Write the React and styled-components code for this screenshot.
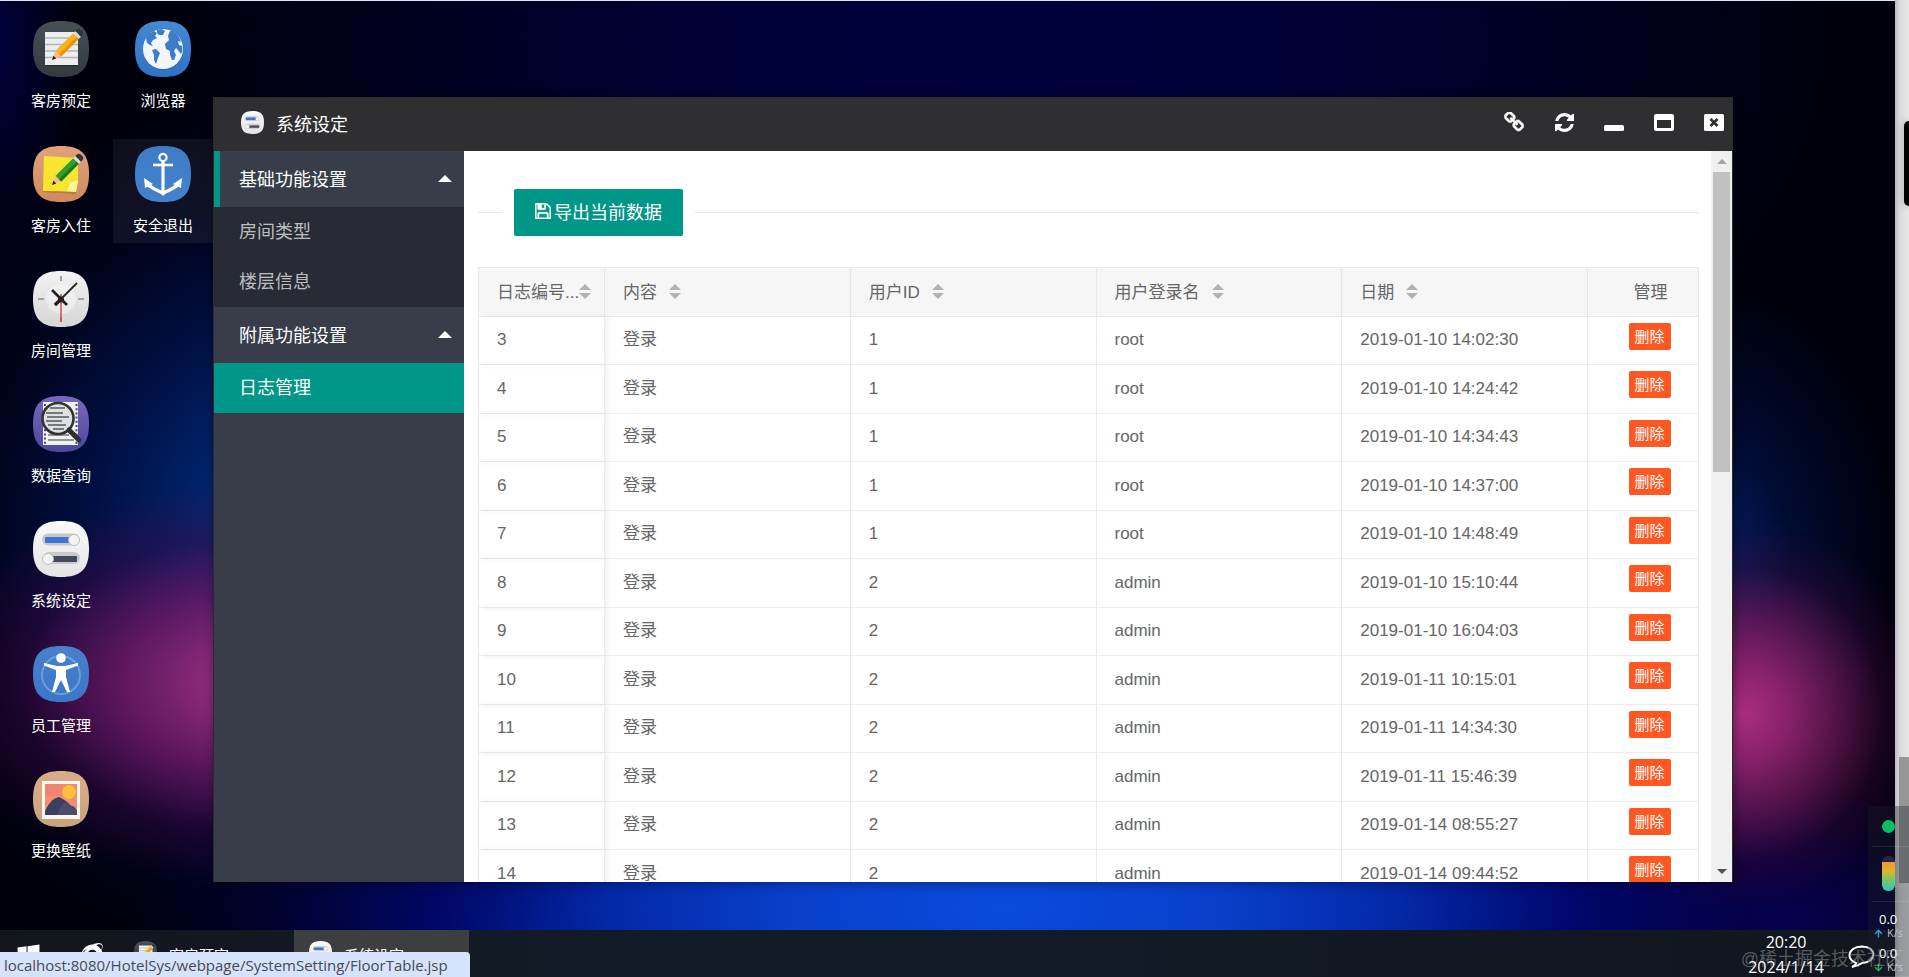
import React from 'react';
import styled, { createGlobalStyle, css } from 'styled-components';
import { FaWindows, FaInternetExplorer, FaArrowUp, FaArrowDown } from 'react-icons/fa';

const GlobalStyle = createGlobalStyle`
  * {
    box-sizing: border-box;
  }

  body {
    margin: 0;
    overflow: hidden;
    font-family: 'Liberation Sans', 'Noto Sans CJK SC', sans-serif;
    color: #666;
  }

  button {
    border: none;
    background: none;
    padding: 0;
    margin: 0;
    font: inherit;
    color: inherit;
    cursor: pointer;
  }

  a {
    color: inherit;
    text-decoration: none;
  }
`;

// Page shell
const Screen = styled.div`
  position: relative;
  display: flex;
  height: 100vh;
  overflow: hidden;
`;

const Desktop = styled.main`
  flex: 1;
  min-width: 0;
  display: flex;
  flex-direction: column;
  border-top: 1px solid #dde6fa;
  background:
    radial-gradient(ellipse 18% 21% at 14% 70%, #9a3886 0%, rgba(144, 40, 122, 0.9) 22%, rgba(118, 24, 102, 0.75) 45%, rgba(70, 8, 76, 0.4) 72%, rgba(40, 0, 60, 0) 100%),
    radial-gradient(ellipse 10% 20% at 92% 73%, #aa2e7e 0%, rgba(152, 36, 114, 0.88) 25%, rgba(118, 26, 94, 0.68) 50%, rgba(70, 10, 66, 0.32) 75%, rgba(40, 0, 50, 0) 100%),
    radial-gradient(ellipse 24% 46% at 17% 54%, #00469c 0%, rgba(0, 44, 128, 0.85) 25%, rgba(0, 24, 96, 0.65) 50%, rgba(0, 10, 60, 0.3) 75%, rgba(0, 4, 30, 0) 100%),
    radial-gradient(ellipse 10% 28% at 90% 57%, #04206c 0%, rgba(0, 16, 66, 0.7) 45%, rgba(0, 8, 40, 0) 100%),
    radial-gradient(ellipse 46% 36% at 53% 93%, #0a4bdc 0%, #083fca 25%, rgba(4, 42, 174, 0.96) 45%, rgba(0, 8, 124, 0.86) 65%, rgba(0, 0, 80, 0.4) 85%, rgba(0, 0, 40, 0) 100%),
    radial-gradient(ellipse 14% 14% at 94% 94%, rgba(10, 0, 84, 0.9), rgba(6, 0, 50, 0)),
    radial-gradient(ellipse 44% 50% at 53% 4%, #00003e 0%, #000034 40%, rgba(0, 0, 16, 0) 100%),
    radial-gradient(ellipse 4% 24% at 0% 4%, #00003a, rgba(0, 0, 16, 0)),
    #00000c;
`;

const Workspace = styled.div`
  position: relative;
  flex: 1;
  min-height: 0;
  display: flex;
  gap: 2px;
  padding: 13px 11px 0;
`;

const IconColumn = styled.div`
  display: flex;
  flex-direction: column;
  gap: 21px;
`;

const Shortcut = styled.button`
  width: 100px;
  height: 104px;
  padding-top: 7px;
  display: flex;
  flex-direction: column;
  align-items: center;
  gap: 14px;
  font-size: 15px;
  line-height: 20px;
  color: #fff;
  background: ${({ $active }) => ($active ? 'rgba(255, 255, 255, 0.06)' : 'transparent')};

  svg {
    flex: none;
  }
`;

// Application window
const AppWindow = styled.section`
  position: absolute;
  top: 96px;
  right: 162px;
  bottom: 48px;
  left: 213px;
  display: flex;
  flex-direction: column;
  border: 1px solid #2b2b2d;
  border-bottom: none;
  box-shadow: 1px 1px 10px rgba(0, 0, 0, 0.4);
`;

const TitleBar = styled.header`
  height: 53px;
  flex: none;
  display: flex;
  align-items: center;
  gap: 12px;
  padding: 0 8px 5px 27px;
  background: #2f2f31;
  color: #fff;
`;

const WindowTitle = styled.h1`
  flex: 1;
  margin: 0;
  padding-top: 5px;
  font-size: 18px;
  line-height: 24px;
  font-weight: 400;
`;

const TitleActions = styled.div`
  display: flex;
  gap: 30px;
`;

const TitleButton = styled.button`
  width: 20px;
  height: 20px;
  display: flex;
  align-items: center;
  justify-content: center;
`;

const WindowBody = styled.div`
  flex: 1;
  min-height: 0;
  display: flex;
`;

const SideNav = styled.nav`
  width: 250px;
  flex: none;
  background: #393d49;
  color: #fff;
  font-size: 18px;
`;

const NavHeading = styled.button`
  width: 100%;
  height: 56px;
  display: flex;
  align-items: center;
  justify-content: space-between;
  padding: 0 12px 2px ${({ $current }) => ($current ? '19px' : '25px')};
  border-left: ${({ $current }) => ($current ? '6px solid #009688' : 'none')};
`;

const NavCaret = styled.span`
  border: 7px solid transparent;
  border-top-width: 0;
  border-bottom-color: #fff;
`;

const NavGroup = styled.div`
  background: #282b33;
`;

const NavLink = styled.a`
  display: block;
  padding-left: 25px;
  line-height: 50px;
  color: rgba(255, 255, 255, 0.7);

  ${({ $active }) => $active && css`
    background: #009688;
    color: #fff;
  `}
`;

const Content = styled.div`
  flex: 1;
  min-width: 0;
  overflow: hidden;
  padding: 38px 12px 0 14px;
  background: #fff;
`;

const Toolbar = styled.div`
  display: flex;
  align-items: center;
  gap: 12px;
  margin-bottom: 31px;

  &::before,
  &::after {
    content: '';
    height: 1px;
    background: #e6e6e6;
  }

  &::before {
    width: 24px;
  }

  &::after {
    flex: 1;
  }
`;

const ExportButton = styled.button`
  height: 47px;
  display: flex;
  align-items: center;
  gap: 3px;
  padding: 0 21px 3px;
  border-radius: 2px;
  background: #009688;
  color: #fff;
  font-size: 18px;
`;

const LogTable = styled.table`
  width: 100%;
  table-layout: fixed;
  border-collapse: separate;
  border-spacing: 0;
  border: 1px solid #e8e8e8;
  border-width: 1px 0 0 1px;
  font-size: 17px;
`;

const HeadCell = styled.th`
  width: ${({ $width }) => $width || 'auto'};
  height: 49px;
  padding: ${({ $center }) => ($center ? '0 0 4px 15px' : '0 0 4px 18px')};
  background: #f6f6f6;
  border: 1px solid #e8e8e8;
  border-width: 0 1px 1px 0;
  font-weight: 400;
  text-align: ${({ $center }) => ($center ? 'center' : 'left')};
  white-space: nowrap;
`;

const SortButton = styled.button`
  display: inline-flex;
  align-items: center;
  gap: ${({ $tight }) => ($tight ? '0' : '12px')};
`;

const SortArrows = styled.span`
  display: flex;
  flex-direction: column;
  gap: 3px;
  padding-top: 3px;

  &::before,
  &::after {
    content: '';
    border: 6px solid transparent;
  }

  &::before {
    border-top-width: 0;
    border-bottom-color: #b2b2b2;
  }

  &::after {
    border-bottom-width: 0;
    border-top-color: #b2b2b2;
  }
`;

const Row = styled.tr`
  height: 48px;

  &:nth-child(even) {
    height: 49px;
  }
`;

const Cell = styled.td`
  padding: 0 0 1px 18px;
  border: 1px solid #ececec;
  border-width: 0 1px 1px 0;
  line-height: 24px;

  &:first-child {
    box-shadow: 3px 0 6px rgba(0, 0, 0, 0.06);
  }
`;

const ActionCell = styled(Cell)`
  padding: 6px 0 0 13px;
  vertical-align: top;
`;

const DeleteButton = styled.button`
  display: block;
  width: 42px;
  height: 27px;
  margin: 0 auto;
  border-radius: 2px;
  background: #ff5722;
  color: #fff;
  font-size: 15px;
  line-height: 27px;
`;

const ScrollTrack = styled.div`
  width: 21px;
  flex: none;
  display: flex;
  flex-direction: column;
  align-items: center;
  padding: 8px 0;
  background: #f0f0f0;
`;

const ScrollThumb = styled.div`
  width: 17px;
  height: 42%;
  margin: 8px 0 auto;
  background: #c1c1c1;
`;

const ScrollArrow = styled.span`
  border: 5px solid transparent;
  ${({ $down }) => ($down
    ? css`border-bottom-width: 0; border-top-color: #505050;`
    : css`border-top-width: 0; border-bottom-color: #a3a3a3;`)}
`;

// Taskbar
const Taskbar = styled.footer`
  height: 47px;
  flex: none;
  display: flex;
  align-items: flex-start;
  overflow: hidden;
  background: linear-gradient(90deg, #12161c, #111b28 35%, #111a26 60%, #12151d);
  color: #fff;
`;

const TaskShortcuts = styled.div`
  width: 119px;
  display: flex;
  gap: 38px;
  padding: 13px 0 0 16px;
`;

const TaskButton = styled.button`
  width: 175px;
  height: 50px;
  display: flex;
  align-items: flex-start;
  gap: 12px;
  padding: 11px 0 0 15px;
  background: ${({ $active }) => ($active ? '#3c3e3f' : 'transparent')};
  font-size: 15px;
  line-height: 30px;
`;

const Tray = styled.div`
  flex: 1;
  display: flex;
  align-items: flex-start;
  justify-content: flex-end;
  gap: 24px;
  padding-right: 20px;
`;

const Clock = styled.time`
  text-align: center;
  font-family: 'Open Sans', sans-serif;
  font-size: 16px;
  line-height: 25px;
`;

const ChatButton = styled.button`
  padding-top: 15px;
`;

const StatusUrl = styled.div`
  position: absolute;
  left: 0;
  bottom: 0;
  min-width: 470px;
  height: 25px;
  padding: 0 9px 0 4px;
  border-top-right-radius: 4px;
  background: #d6e3fc;
  color: #474a52;
  font-family: 'Open Sans', sans-serif;
  font-size: 15px;
  line-height: 27px;
`;

// Strip of the page behind the desktop, with its own scrollbar
const EdgeStrip = styled.aside`
  width: 14px;
  flex: none;
  display: flex;
  flex-direction: column;
  align-items: flex-end;
  padding-top: 121px;
  background: linear-gradient(90deg, #bdbdbf, #dcdcdc 35%, #e6e6e6);
`;

const EdgeHandle = styled.div`
  width: 5px;
  height: 85px;
  border-radius: 5px 0 0 5px;
  background: #000;
  box-shadow: 0 0 8px rgba(0, 0, 0, 0.3);
`;

const EdgeThumb = styled.div`
  width: 10px;
  height: 126px;
  margin: auto 0 94px;
  background: #969696;
`;

const Monitor = styled.div`
  position: absolute;
  right: 0;
  bottom: 0;
  width: 41px;
  height: 171px;
  padding-left: 4px;
  border-radius: 4px 0 0 4px;
  background: rgba(28, 30, 42, 0.36);
  font-family: 'Open Sans', sans-serif;
`;

const MonitorSection = styled.div`
  height: ${({ $height }) => $height};
  padding: ${({ $pad }) => $pad};
  border-bottom: 1px solid rgba(255, 255, 255, 0.1);
`;

const StatusDot = styled.div`
  width: 13px;
  height: 13px;
  border-radius: 50%;
  background: #07c160;
`;

const Gauge = styled.div`
  width: 13px;
  height: 35px;
  border-radius: 6px;
  background: linear-gradient(#2d2340 6px, #ee9a3a 6px, #d9b62c 16px, #6fc96a 24px, #35c3bd);
`;

const Speed = styled.div`
  padding-left: 2px;
  color: #fff;
  font-size: 13px;
  line-height: 16px;

  strong {
    display: block;
    padding-left: 5px;
    font-weight: 400;
  }
`;

const SpeedUnit = styled.span`
  display: flex;
  align-items: center;
  gap: 4px;
  margin-bottom: 6px;
  font-size: 11px;
  line-height: 12px;
  color: #bfc0c8;
`;

const Watermark = styled.div`
  position: absolute;
  right: 6px;
  bottom: 6px;
  font-size: 18px;
  line-height: 24px;
  color: rgba(205, 205, 205, 0.38);
  pointer-events: none;
`;

// Icons
const TILE = 'M28 0C48 0 56 8 56 28S48 56 28 56 0 48 0 28 8 0 28 0Z';

const Tile = ({ id, from, to, size = 56, children }) => (
  <svg width={size} height={size} viewBox="0 0 56 56" aria-hidden="true">
    <defs>
      <linearGradient id={id} x1="0" y1="0" x2="0" y2="1">
        <stop offset="0" stopColor={from} />
        <stop offset="1" stopColor={to} />
      </linearGradient>
    </defs>
    <path d={TILE} fill={`url(#${id})`} />
    {children}
  </svg>
);

const Pencil = ({ body, shade }) => (
  <g transform="translate(19 39) rotate(-45)">
    <path d="M0 0L9 -4V4Z" fill="#f3bd8c" />
    <path d="M0 0L4 -2V2Z" fill="#222" />
    <rect x="9" y="-4" width="25" height="8" fill={body} />
    <rect x="9" y="1" width="25" height="3" fill={shade} />
    <rect x="34" y="-4" width="3" height="8" fill="#d9dcdc" />
    <path d="M37 -4h2q3 0 3 4t-3 4h-2Z" fill="#303437" />
  </g>
);

const BookingIcon = ({ size }) => (
  <Tile id="tile-booking" from="#465057" to="#343a40" size={size}>
    <path d="M12 11H45V44H12Z" fill="#eceded" />
    <path d="M12 17H45M12 23.500H45M12 30H45M12 36.500H45" stroke="#b3b6b8" strokeWidth="1.400" />
    <path d="M12 44.500H45" stroke="#22272a" strokeWidth="1" />
    <Pencil body="#fbb21c" shade="#e8920e" />
  </Tile>
);

const CheckInIcon = () => (
  <Tile id="tile-checkin" from="#e0a27c" to="#cf8a5f">
    <path d="M11 10L45 12V36L43 46L10 45Z" fill="#f7e52f" />
    <path d="M10 45L43 46V48L10 46Z" fill="#b77b3a" />
    <path d="M34 45L37 37L45 34L43 46Z" fill="#fdf3a0" />
    <Pencil body="#2ea12c" shade="#157a1b" />
  </Tile>
);

const RoomIcon = () => (
  <Tile id="tile-room" from="#f3f3f3" to="#d5d5d5">
    <circle cx="28" cy="28" r="15" fill="#fff" opacity="0.35" />
    <path d="M28 5V10M28 46V51M5 28H11M45 28H51" stroke="#8d8d8d" strokeWidth="1.600" />
    <path d="M28 23V51" stroke="#d8433b" strokeWidth="1.400" />
    <path d="M22 34L44 12" stroke="#222" strokeWidth="1.800" />
    <path d="M19 19L34 34" stroke="#222" strokeWidth="2.600" />
    <path d="M22 34L28 28" stroke="#222" strokeWidth="3.400" />
    <circle cx="28" cy="28.500" r="3" fill="#222" />
  </Tile>
);

const QueryIcon = () => (
  <Tile id="tile-query" from="#7867bd" to="#4c489d">
    <path d="M10 6H45V49H10Z" fill="#f1f1f4" />
    <path d="M12 8V48M43.500 8V48" stroke="#4d4680" strokeWidth="2" strokeDasharray="2 2.200" />
    <path d="M15 44H41M15 39H36" stroke="#777" strokeWidth="1.500" />
    <circle cx="25" cy="22.500" r="15.500" fill="#dfe0e2" stroke="#333" strokeWidth="2.600" />
    <path d="M17 12H32M13 17H30M14 21H36M13 25H29M15 29H33M20 33H31" stroke="#55585c" strokeWidth="1.500" />
    <path d="M36 34L46 44" stroke="#2e2e30" strokeWidth="5" strokeLinecap="round" />
  </Tile>
);

const SettingsIcon = ({ size }) => (
  <Tile id="tile-settings" from="#fafafa" to="#e4e4e6" size={size}>
    <rect x="9" y="12.500" width="37" height="12" rx="6" fill="#c9c9cb" />
    <rect x="12" y="16" width="26" height="6" rx="1" fill="#3b76d6" />
    <circle cx="41" cy="19" r="5.500" fill="#f4f4f4" stroke="#bdbdbd" />
    <rect x="10" y="31" width="37" height="12" rx="6" fill="#c9c9cb" />
    <rect x="18" y="35" width="26" height="6" rx="1" fill="#434a5c" />
    <circle cx="15" cy="38" r="5.500" fill="#f4f4f4" stroke="#bdbdbd" />
  </Tile>
);

const StaffIcon = () => (
  <Tile id="tile-staff" from="#4a80ca" to="#3b76c8">
    <circle cx="28" cy="29" r="19" fill="none" stroke="#7fb0e8" strokeWidth="1.800" opacity="0.7" />
    <circle cx="28" cy="12" r="4.800" fill="#fff" />
    <path d="M11 17L24 20H32L45 17V19.500L33 24V31L37 46H34L28 34L22 46H19L23 31V24L11 19.500Z" fill="#fff" />
  </Tile>
);

const WallpaperIcon = () => (
  <Tile id="tile-wallpaper" from="#d8ae88" to="#c9a27d">
    <path d="M9 10H47V48H9Z" fill="#fbf6f2" />
    <path d="M12 13H44V44H12Z" fill="#f08f74" />
    <path d="M12 13H44V25H12Z" fill="#ee7d6d" opacity="0.6" />
    <circle cx="36" cy="21" r="7" fill="#fbbf3c" />
    <path d="M12 44V40Q18 27 26 26Q33 29 38 35Q42 35 44 40V44Z" fill="#3a3f5f" />
    <path d="M24 44Q27 34 32 31Q37 34 39 35Q42 36 44 40V44Z" fill="#4a4c6c" />
  </Tile>
);

const BrowserIcon = () => (
  <Tile id="tile-browser" from="#4489d3" to="#2f72c4">
    <circle cx="28" cy="29" r="20" fill="#1f5aa5" opacity="0.5" />
    <circle cx="28" cy="28" r="20" fill="#f2f7fd" />
    <path d="M11 17Q14 12 19 10L22 12L20 15L22 17L18 19L16 22L18 25L15 24L12 22ZM22 9L27 8L30 10L28 14L24 14L22 12ZM17 29L21 28L25 32L23 37L21 43L19 39L19 34Z" fill="#3d7cc8" />
    <path d="M35 10L38 10Q44 14 46 21L43 20L44 24L47 25Q48 30 46 33L43 29L41 27L39 30L41 34L39 39L37 39L35 34V30L31 28L30 23L34 19L33 15Z" fill="#3d7cc8" />
  </Tile>
);

const ExitIcon = () => (
  <Tile id="tile-exit" from="#3f7cc6" to="#4582cc">
    <g fill="none" stroke="#fff">
      <circle cx="28" cy="11.500" r="3.600" strokeWidth="2.200" />
      <path d="M18 19H38" strokeWidth="2.600" />
      <path d="M28 15V47" strokeWidth="3.200" />
      <path d="M12 38Q18 43 28 47Q38 43 44 38" strokeWidth="3.400" />
    </g>
    <path d="M9 32L18 38L10 42ZM47 32L38 38L46 42ZM24 46H32L28 50Z" fill="#fff" />
  </Tile>
);

const LinkIcon = () => (
  <svg width="20" height="20" viewBox="0 64 1664 1664" fill="currentColor" aria-hidden="true">
    <path stroke="currentColor" strokeWidth="50" d="M1456 1216q0-40-28-68l-208-208q-28-28-68-28-42 0-72 32 3 3 19 18.500t21.500 21.500 15 19 13 25.500 3.500 27.500q0 40-28 68t-68 28q-15 0-27.500-3.500t-25.500-13-19-15-21.500-21.500-18.500-19q-33 31-33 73 0 40 28 68l206 207q27 27 68 27 40 0 68-26l147-146q28-28 28-67zm-703-705q0-40-28-68l-206-207q-28-28-68-28-39 0-68 27l-147 146q-28 28-28 67 0 40 28 68l208 208q27 27 68 27 42 0 72-31-3-3-19-18.500t-21.500-21.500-15-19-13-25.500-3.500-27.500q0-40 28-68t68-28q15 0 27.500 3.500t25.500 13 19 15 21.500 21.500 18.500 19q33-31 33-73zm895 705q0 120-85 203l-147 146q-83 83-203 83-121 0-204-85l-206-207q-83-83-83-203 0-123 88-209l-88-88q-86 88-208 88-120 0-204-84l-208-208q-84-84-84-204t85-203l147-146q83-83 203-83 121 0 204 85l206 207q83 83 83 203 0 123-88 209l88 88q86-88 208-88 120 0 204 84l208 208q84 84 84 204z" />
  </svg>
);

const RefreshIcon = () => (
  <svg width="19" height="19" viewBox="0 0 1536 1536" fill="currentColor" aria-hidden="true">
    <path d="M1511 928q0 5-1 7-64 268-268 434.500t-478 166.500q-146 0-282.500-55t-243.500-157l-129 129q-19 19-45 19t-45-19-19-45v-448q0-26 19-45t45-19h448q26 0 45 19t19 45-19 45l-137 137q71 66 161 102t187 36q134 0 250-65t186-179q11-17 53-117 8-23 30-23h192q13 0 22.500 9.500t9.500 22.500zm25-800v448q0 26-19 45t-45 19h-448q-26 0-45-19t-19-45 19-45l138-138q-148-137-349-137-134 0-250 65t-186 179q-11 17-53 117-8 23-30 23h-199q-13 0-22.500-9.500t-9.500-22.500v-7q65-268 270-434.500t480-166.500q146 0 284 55.500t245 156.500l130-129q19-19 45-19t45 19 19 45z" />
  </svg>
);

const MinimizeIcon = () => (
  <svg width="20" height="20" viewBox="0 0 20 20" aria-hidden="true">
    <rect x="0" y="13" width="20" height="6" rx="1.500" fill="currentColor" />
  </svg>
);

const MaximizeIcon = () => (
  <svg width="20" height="20" viewBox="0 0 20 20" aria-hidden="true">
    <path fillRule="evenodd" fill="currentColor" d="M2 2H18Q20 2 20 4V17Q20 19 18 19H2Q0 19 0 17V4Q0 2 2 2ZM3 8V16H17V8Z" />
  </svg>
);

const CloseIcon = () => (
  <svg width="20" height="20" viewBox="0 0 20 20" aria-hidden="true">
    <rect x="0" y="2" width="20" height="17" rx="1.500" fill="currentColor" />
    <path d="M6.500 7L13.500 14M13.500 7L6.500 14" stroke="#2f2f31" strokeWidth="2.600" />
  </svg>
);

const SaveIcon = () => (
  <svg width="16" height="16" viewBox="128 128 1536 1536" fill="currentColor" aria-hidden="true">
    <path stroke="currentColor" strokeWidth="40" d="M512 1536h768v-384h-768v384zm896 0h128v-896q0-14-10-38.500t-20-34.500l-281-281q-10-10-34-20t-39-10v416q0 40-28 68t-68 28h-576q-40 0-68-28t-28-68v-416h-128v1280h128v-416q0-40 28-68t68-28h832q40 0 68 28t28 68v416zm-384-928v-320q0-13-9.500-22.500t-22.500-9.500h-192q-13 0-22.500 9.500t-9.500 22.500v320q0 13 9.500 22.500t22.500 9.500h192q13 0 22.500-9.500t9.500-22.500zm640 32v928q0 40-28 68t-68 28h-1344q-40 0-68-28t-28-68v-1344q0-40 28-68t68-28h928q40 0 88 20t76 48l280 280q28 28 48 76t20 88z" />
  </svg>
);

const ChatIcon = () => (
  <svg width="27" height="24" viewBox="0 0 27 24" fill="none" stroke="#fff" strokeWidth="2" aria-hidden="true">
    <path d="M8 18Q1 15 1.500 9.500Q3 2 14 1.500Q25 2 25.500 9.500Q25 17 14 18Q10 21 4 22Q8 20 8 18Z" />
  </svg>
);

const shortcutColumns = [
  [
    { label: '客房预定', Icon: BookingIcon },
    { label: '客房入住', Icon: CheckInIcon },
    { label: '房间管理', Icon: RoomIcon },
    { label: '数据查询', Icon: QueryIcon },
    { label: '系统设定', Icon: SettingsIcon },
    { label: '员工管理', Icon: StaffIcon },
    { label: '更换壁纸', Icon: WallpaperIcon },
  ],
  [
    { label: '浏览器', Icon: BrowserIcon },
    { label: '安全退出', Icon: ExitIcon, active: true },
  ],
];

const titleActions = [
  { label: '链接', Icon: LinkIcon },
  { label: '刷新', Icon: RefreshIcon },
  { label: '最小化', Icon: MinimizeIcon },
  { label: '最大化', Icon: MaximizeIcon },
  { label: '关闭', Icon: CloseIcon },
];

const columns = [
  { title: '日志编号...', width: '126px', tight: true },
  { title: '内容' },
  { title: '用户ID' },
  { title: '用户登录名' },
  { title: '日期' },
];

const logs = [
  { id: 3, userId: 1, user: 'root', date: '2019-01-10 14:02:30' },
  { id: 4, userId: 1, user: 'root', date: '2019-01-10 14:24:42' },
  { id: 5, userId: 1, user: 'root', date: '2019-01-10 14:34:43' },
  { id: 6, userId: 1, user: 'root', date: '2019-01-10 14:37:00' },
  { id: 7, userId: 1, user: 'root', date: '2019-01-10 14:48:49' },
  { id: 8, userId: 2, user: 'admin', date: '2019-01-10 15:10:44' },
  { id: 9, userId: 2, user: 'admin', date: '2019-01-10 16:04:03' },
  { id: 10, userId: 2, user: 'admin', date: '2019-01-11 10:15:01' },
  { id: 11, userId: 2, user: 'admin', date: '2019-01-11 14:34:30' },
  { id: 12, userId: 2, user: 'admin', date: '2019-01-11 15:46:39' },
  { id: 13, userId: 2, user: 'admin', date: '2019-01-14 08:55:27' },
  { id: 14, userId: 2, user: 'admin', date: '2019-01-14 09:44:52' },
];

const SettingsWindow = () => (
  <AppWindow>
    <TitleBar>
      <SettingsIcon size={23} />
      <WindowTitle>系统设定</WindowTitle>
      <TitleActions>
        {titleActions.map(({ label, Icon }) => (
          <TitleButton key={label} aria-label={label}>
            <Icon />
          </TitleButton>
        ))}
      </TitleActions>
    </TitleBar>
    <WindowBody>
      <SideNav>
        <NavHeading $current>
          基础功能设置
          <NavCaret />
        </NavHeading>
        <NavGroup>
          <NavLink href="#room-type">房间类型</NavLink>
          <NavLink href="#floor">楼层信息</NavLink>
        </NavGroup>
        <NavHeading>
          附属功能设置
          <NavCaret />
        </NavHeading>
        <NavGroup>
          <NavLink href="#log" $active>日志管理</NavLink>
        </NavGroup>
      </SideNav>
      <Content>
        <Toolbar>
          <ExportButton>
            <SaveIcon />
            导出当前数据
          </ExportButton>
        </Toolbar>
        <LogTable>
          <thead>
            <tr>
              {columns.map(({ title, width, tight }) => (
                <HeadCell key={title} $width={width}>
                  <SortButton $tight={tight}>
                    {title}
                    <SortArrows />
                  </SortButton>
                </HeadCell>
              ))}
              <HeadCell $width="111px" $center>管理</HeadCell>
            </tr>
          </thead>
          <tbody>
            {logs.map((log) => (
              <Row key={log.id}>
                <Cell>{log.id}</Cell>
                <Cell>登录</Cell>
                <Cell>{log.userId}</Cell>
                <Cell>{log.user}</Cell>
                <Cell>{log.date}</Cell>
                <ActionCell>
                  <DeleteButton>删除</DeleteButton>
                </ActionCell>
              </Row>
            ))}
          </tbody>
        </LogTable>
      </Content>
      <ScrollTrack>
        <ScrollArrow />
        <ScrollThumb />
        <ScrollArrow $down />
      </ScrollTrack>
    </WindowBody>
  </AppWindow>
);

const App = () => (
  <>
    <GlobalStyle />
    <Screen>
      <Desktop>
        <Workspace>
          {shortcutColumns.map((column, index) => (
            <IconColumn key={index}>
              {column.map(({ label, Icon, active }) => (
                <Shortcut key={label} $active={active}>
                  <Icon />
                  {label}
                </Shortcut>
              ))}
            </IconColumn>
          ))}
          <SettingsWindow />
        </Workspace>
        <Taskbar>
          <TaskShortcuts>
            <FaWindows size={25} />
            <FaInternetExplorer size={24} />
          </TaskShortcuts>
          <TaskButton>
            <BookingIcon size={23} />
            客房预定
          </TaskButton>
          <TaskButton $active>
            <SettingsIcon size={23} />
            系统设定
          </TaskButton>
          <Tray>
            <Clock>
              20:20
              <br />
              2024/1/14
            </Clock>
            <ChatButton aria-label="消息">
              <ChatIcon />
            </ChatButton>
          </Tray>
        </Taskbar>
      </Desktop>
      <EdgeStrip>
        <EdgeHandle />
        <EdgeThumb />
      </EdgeStrip>
      <Monitor>
        <MonitorSection $height="41px" $pad="14px 0 0 10px">
          <StatusDot />
        </MonitorSection>
        <MonitorSection $height="55px" $pad="9px 0 0 10px">
          <Gauge />
        </MonitorSection>
        <MonitorSection $height="75px" $pad="9px 0 0">
          <Speed>
            <strong>0.0</strong>
            <SpeedUnit>
              <FaArrowUp size={9} color="#2aa3f0" />
              K/s
            </SpeedUnit>
            <strong>0.0</strong>
            <SpeedUnit>
              <FaArrowDown size={9} color="#12b76a" />
              K/s
            </SpeedUnit>
          </Speed>
        </MonitorSection>
      </Monitor>
      <StatusUrl>localhost:8080/HotelSys/webpage/SystemSetting/FloorTable.jsp</StatusUrl>
      <Watermark>@稀土掘金技术社区</Watermark>
    </Screen>
  </>
);

export default App;
